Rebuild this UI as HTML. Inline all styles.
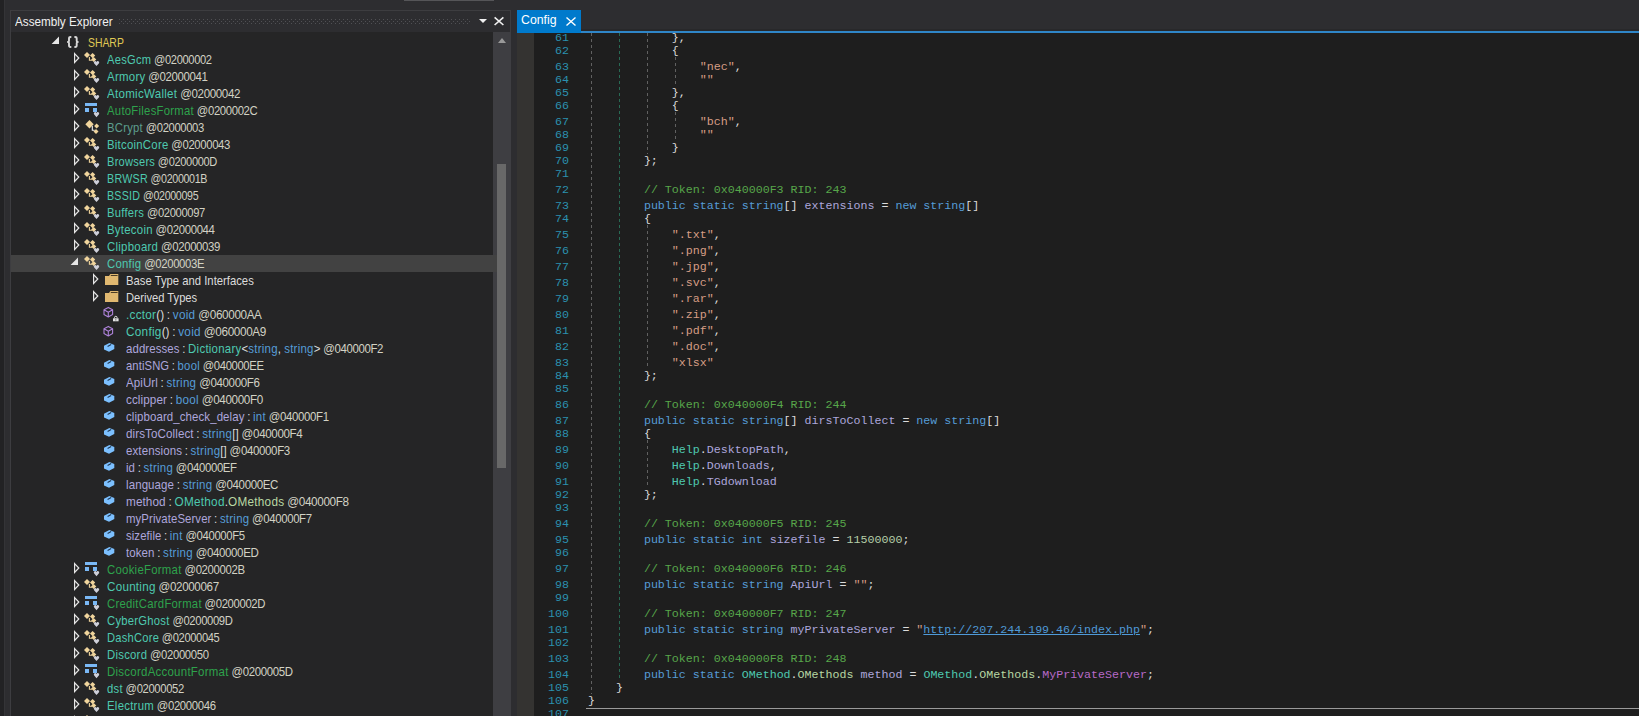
<!DOCTYPE html><html><head><meta charset="utf-8"><style>

html,body{margin:0;padding:0;width:1639px;height:716px;overflow:hidden;background:#2d2d30;}
*{box-sizing:border-box;}
.a{position:absolute;}
.t{position:absolute;white-space:pre;font-family:"Liberation Sans",sans-serif;font-size:13.1px;line-height:17px;height:17px;transform:scaleX(0.862);transform-origin:0 0;}
.g{position:absolute;width:1px;}
.c{position:absolute;white-space:pre;font-family:"Liberation Mono",monospace;font-size:11.657px;left:588px;}
.n{position:absolute;white-space:pre;font-family:"Liberation Mono",monospace;font-size:11.657px;color:#2b91af;right:1070px;text-align:right;}
.kw{color:#569cd6} .ty{color:#4ec9b0} .st{color:#d69d85} .com{color:#57a64a} .pun{color:#dcdcdc}
.num{color:#b5cea8} .fld{color:#ada6dc} .tok{color:#d2d2c4} .lnk{color:#4f9ad8;text-decoration:underline;}
.en{color:#b86ac8} .et{color:#b8d7a3}
.t .tok{letter-spacing:-0.42px} .t .ty,.t .sr,.t .sc,.t .kw,.t .et{letter-spacing:0.3px} .t .fld{letter-spacing:0.1px} .t .cs{word-spacing:-0.6px} .ns{color:#e0ca55} .sr{color:#2ea24c} .sc{color:#5d9e8e}

</style></head><body>
<div class="a" style="left:0;top:0;width:4px;height:716px;background:#222224"></div>
<div class="a" style="left:4px;top:0;width:1px;height:716px;background:#343437"></div>
<div class="a" style="left:404px;top:0;width:90px;height:1px;background:#555558"></div>
<div class="a" style="left:10px;top:10px;width:501px;height:706px;border:1px solid #3d3d40;border-bottom:none;background:#252526"></div>
<div class="a" style="left:11px;top:11px;width:499px;height:21px;background:#2d2d30"></div>
<div class="t" style="left:15px;top:13.2px;font-size:13.7px;transform:scaleX(0.855);color:#f1f1f1;line-height:18px;height:18px">Assembly Explorer</div>
<svg class="a" style="left:119px;top:19px" width="352" height="5"><defs><pattern id="g" width="4" height="4" patternUnits="userSpaceOnUse"><rect x="0" y="0" width="1" height="1" fill="#505054"/><rect x="2" y="2" width="1" height="1" fill="#505054"/></pattern></defs><rect width="352" height="5" fill="url(#g)"/></svg>
<svg class="a" style="left:477px;top:16px" width="12" height="10"><path d="M2 3 L10 3 L6 7 Z" fill="#f1f1f1"/></svg>
<svg class="a" style="left:492px;top:15px" width="14" height="12"><path d="M2.6 2.3 L11.4 10 M11.4 2.3 L2.6 10" stroke="#f1f1f1" stroke-width="1.6"/></svg>
<div class="a" style="left:493px;top:32px;width:18px;height:684px;background:#3e3e42"></div>
<svg class="a" style="left:493px;top:32px" width="18" height="14"><path d="M5 11 L13 11 L9 6 Z" fill="#999999"/></svg>
<div class="a" style="left:497px;top:164px;width:9px;height:304px;background:#686868"></div>
<div class="a" style="left:11px;top:255px;width:486px;height:17px;background:#424242"></div>
<svg class="a" style="left:51px;top:34px" width="10" height="12"><path d="M8 2.6 L8 10.1 L0.6 10.1 Z" fill="#e6e6e6"/></svg>
<svg class="a" style="left:64px;top:34px" width="18" height="16"><path d="M6.6 3 Q5 3 5 4.5 V7 Q5 8 3.9 8 Q5 8 5 9 V11.5 Q5 13 6.6 13 M11.1 3 Q12.7 3 12.7 4.5 V7 Q12.7 8 13.8 8 Q12.7 8 12.7 9 V11.5 Q12.7 13 11.1 13" fill="none" stroke="#d8d8d8" stroke-width="1.9" stroke-linecap="round" stroke-linejoin="round"/></svg>
<div class="t ns" style="left:88px;top:34px;transform:scaleX(0.7938);">SHARP</div>
<svg class="a" style="left:73px;top:51px" width="8" height="14"><path d="M1.6 2.6 L5.8 7 L1.6 11.4 Z" fill="none" stroke="#e6e6e6" stroke-width="1.2" stroke-linejoin="miter"/></svg>
<svg class="a" style="left:84px;top:51px" width="17" height="17"><path d="M0 4 L3 1 L6 4 L3 7 Z" fill="#f0d49c"/><path d="M6 4.6 L8.6 2 L11.2 4.6 L8.6 7.2 Z" fill="#f0d49c"/><path d="M7.1 8.5 L9.7 5.9 L12.3 8.5 L9.7 11.1 Z" fill="#f0d49c"/><path d="M5.4 6 V9.3 H8" fill="none" stroke="#f0d49c" stroke-width="1.1"/><path d="M12.5 15 L10 12.3 A1.35 1.35 0 0 1 12.5 10.9 A1.35 1.35 0 0 1 15 12.3 Z" fill="#cfd0da"/></svg>
<div class="t" style="left:107px;top:51px;transform:scaleX(0.8511);"><span class="ty">AesGcm</span><span class="tok"> @02000002</span></div>
<svg class="a" style="left:73px;top:68px" width="8" height="14"><path d="M1.6 2.6 L5.8 7 L1.6 11.4 Z" fill="none" stroke="#e6e6e6" stroke-width="1.2" stroke-linejoin="miter"/></svg>
<svg class="a" style="left:84px;top:68px" width="17" height="17"><path d="M0 4 L3 1 L6 4 L3 7 Z" fill="#f0d49c"/><path d="M6 4.6 L8.6 2 L11.2 4.6 L8.6 7.2 Z" fill="#f0d49c"/><path d="M7.1 8.5 L9.7 5.9 L12.3 8.5 L9.7 11.1 Z" fill="#f0d49c"/><path d="M5.4 6 V9.3 H8" fill="none" stroke="#f0d49c" stroke-width="1.1"/><path d="M12.5 15 L10 12.3 A1.35 1.35 0 0 1 12.5 10.9 A1.35 1.35 0 0 1 15 12.3 Z" fill="#cfd0da"/></svg>
<div class="t" style="left:107px;top:68px;transform:scaleX(0.8743);"><span class="ty">Armory</span><span class="tok"> @02000041</span></div>
<svg class="a" style="left:73px;top:85px" width="8" height="14"><path d="M1.6 2.6 L5.8 7 L1.6 11.4 Z" fill="none" stroke="#e6e6e6" stroke-width="1.2" stroke-linejoin="miter"/></svg>
<svg class="a" style="left:84px;top:85px" width="17" height="17"><path d="M0 4 L3 1 L6 4 L3 7 Z" fill="#f0d49c"/><path d="M6 4.6 L8.6 2 L11.2 4.6 L8.6 7.2 Z" fill="#f0d49c"/><path d="M7.1 8.5 L9.7 5.9 L12.3 8.5 L9.7 11.1 Z" fill="#f0d49c"/><path d="M5.4 6 V9.3 H8" fill="none" stroke="#f0d49c" stroke-width="1.1"/><path d="M12.5 15 L10 12.3 A1.35 1.35 0 0 1 12.5 10.9 A1.35 1.35 0 0 1 15 12.3 Z" fill="#cfd0da"/></svg>
<div class="t" style="left:107px;top:85px;transform:scaleX(0.8839);"><span class="ty">AtomicWallet</span><span class="tok"> @02000042</span></div>
<svg class="a" style="left:73px;top:102px" width="8" height="14"><path d="M1.6 2.6 L5.8 7 L1.6 11.4 Z" fill="none" stroke="#e6e6e6" stroke-width="1.2" stroke-linejoin="miter"/></svg>
<svg class="a" style="left:84px;top:102px" width="17" height="17"><rect x="1" y="1" width="12" height="3" fill="#7ab8f5"/><rect x="1" y="6" width="4" height="4" fill="#7ab8f5"/><rect x="9" y="6" width="4" height="4" fill="#7ab8f5"/><path d="M12.5 15.2 L10 12.3 A1.35 1.35 0 0 1 12.5 10.9 A1.35 1.35 0 0 1 15 12.3 Z" fill="#cfd0da"/></svg>
<div class="t" style="left:107px;top:102px;transform:scaleX(0.8655);"><span class="sr">AutoFilesFormat</span><span class="tok"> @0200002C</span></div>
<svg class="a" style="left:73px;top:119px" width="8" height="14"><path d="M1.6 2.6 L5.8 7 L1.6 11.4 Z" fill="none" stroke="#e6e6e6" stroke-width="1.2" stroke-linejoin="miter"/></svg>
<svg class="a" style="left:84px;top:119px" width="17" height="17"><path d="M1.3 5.3 L5.5 1.1 L9.7 5.3 L5.5 9.5 Z" fill="#f0d49c"/><path d="M10.1 7 L12.6 4.5 L15.1 7 L12.6 9.5 Z" fill="#f0d49c"/><path d="M9.5 12.6 L12 10.1 L14.5 12.6 L12 15.1 Z" fill="#f0d49c"/><path d="M8.3 6.8 V11.2 H10.6" fill="none" stroke="#f4f4f4" stroke-width="1.1"/></svg>
<div class="t" style="left:107px;top:119px;transform:scaleX(0.8589);"><span class="sc">BCrypt</span><span class="tok"> @02000003</span></div>
<svg class="a" style="left:73px;top:136px" width="8" height="14"><path d="M1.6 2.6 L5.8 7 L1.6 11.4 Z" fill="none" stroke="#e6e6e6" stroke-width="1.2" stroke-linejoin="miter"/></svg>
<svg class="a" style="left:84px;top:136px" width="17" height="17"><path d="M0 4 L3 1 L6 4 L3 7 Z" fill="#f0d49c"/><path d="M6 4.6 L8.6 2 L11.2 4.6 L8.6 7.2 Z" fill="#f0d49c"/><path d="M7.1 8.5 L9.7 5.9 L12.3 8.5 L9.7 11.1 Z" fill="#f0d49c"/><path d="M5.4 6 V9.3 H8" fill="none" stroke="#f0d49c" stroke-width="1.1"/><path d="M12.5 15 L10 12.3 A1.35 1.35 0 0 1 12.5 10.9 A1.35 1.35 0 0 1 15 12.3 Z" fill="#cfd0da"/></svg>
<div class="t" style="left:107px;top:136px;transform:scaleX(0.8663);"><span class="ty">BitcoinCore</span><span class="tok"> @02000043</span></div>
<svg class="a" style="left:73px;top:153px" width="8" height="14"><path d="M1.6 2.6 L5.8 7 L1.6 11.4 Z" fill="none" stroke="#e6e6e6" stroke-width="1.2" stroke-linejoin="miter"/></svg>
<svg class="a" style="left:84px;top:153px" width="17" height="17"><path d="M0 4 L3 1 L6 4 L3 7 Z" fill="#f0d49c"/><path d="M6 4.6 L8.6 2 L11.2 4.6 L8.6 7.2 Z" fill="#f0d49c"/><path d="M7.1 8.5 L9.7 5.9 L12.3 8.5 L9.7 11.1 Z" fill="#f0d49c"/><path d="M5.4 6 V9.3 H8" fill="none" stroke="#f0d49c" stroke-width="1.1"/><path d="M12.5 15 L10 12.3 A1.35 1.35 0 0 1 12.5 10.9 A1.35 1.35 0 0 1 15 12.3 Z" fill="#cfd0da"/></svg>
<div class="t" style="left:107px;top:153px;transform:scaleX(0.8449);"><span class="ty">Browsers</span><span class="tok"> @0200000D</span></div>
<svg class="a" style="left:73px;top:170px" width="8" height="14"><path d="M1.6 2.6 L5.8 7 L1.6 11.4 Z" fill="none" stroke="#e6e6e6" stroke-width="1.2" stroke-linejoin="miter"/></svg>
<svg class="a" style="left:84px;top:170px" width="17" height="17"><path d="M0 4 L3 1 L6 4 L3 7 Z" fill="#f0d49c"/><path d="M6 4.6 L8.6 2 L11.2 4.6 L8.6 7.2 Z" fill="#f0d49c"/><path d="M7.1 8.5 L9.7 5.9 L12.3 8.5 L9.7 11.1 Z" fill="#f0d49c"/><path d="M5.4 6 V9.3 H8" fill="none" stroke="#f0d49c" stroke-width="1.1"/><path d="M12.5 15 L10 12.3 A1.35 1.35 0 0 1 12.5 10.9 A1.35 1.35 0 0 1 15 12.3 Z" fill="#cfd0da"/></svg>
<div class="t" style="left:107px;top:170px;transform:scaleX(0.8178);"><span class="ty">BRWSR</span><span class="tok"> @0200001B</span></div>
<svg class="a" style="left:73px;top:187px" width="8" height="14"><path d="M1.6 2.6 L5.8 7 L1.6 11.4 Z" fill="none" stroke="#e6e6e6" stroke-width="1.2" stroke-linejoin="miter"/></svg>
<svg class="a" style="left:84px;top:187px" width="17" height="17"><path d="M0 4 L3 1 L6 4 L3 7 Z" fill="#f0d49c"/><path d="M6 4.6 L8.6 2 L11.2 4.6 L8.6 7.2 Z" fill="#f0d49c"/><path d="M7.1 8.5 L9.7 5.9 L12.3 8.5 L9.7 11.1 Z" fill="#f0d49c"/><path d="M5.4 6 V9.3 H8" fill="none" stroke="#f0d49c" stroke-width="1.1"/><path d="M12.5 15 L10 12.3 A1.35 1.35 0 0 1 12.5 10.9 A1.35 1.35 0 0 1 15 12.3 Z" fill="#cfd0da"/></svg>
<div class="t" style="left:107px;top:187px;transform:scaleX(0.8163);"><span class="ty">BSSID</span><span class="tok"> @02000095</span></div>
<svg class="a" style="left:73px;top:204px" width="8" height="14"><path d="M1.6 2.6 L5.8 7 L1.6 11.4 Z" fill="none" stroke="#e6e6e6" stroke-width="1.2" stroke-linejoin="miter"/></svg>
<svg class="a" style="left:84px;top:204px" width="17" height="17"><path d="M0 4 L3 1 L6 4 L3 7 Z" fill="#f0d49c"/><path d="M6 4.6 L8.6 2 L11.2 4.6 L8.6 7.2 Z" fill="#f0d49c"/><path d="M7.1 8.5 L9.7 5.9 L12.3 8.5 L9.7 11.1 Z" fill="#f0d49c"/><path d="M5.4 6 V9.3 H8" fill="none" stroke="#f0d49c" stroke-width="1.1"/><path d="M12.5 15 L10 12.3 A1.35 1.35 0 0 1 12.5 10.9 A1.35 1.35 0 0 1 15 12.3 Z" fill="#cfd0da"/></svg>
<div class="t" style="left:107px;top:204px;transform:scaleX(0.8562);"><span class="ty">Buffers</span><span class="tok"> @02000097</span></div>
<svg class="a" style="left:73px;top:221px" width="8" height="14"><path d="M1.6 2.6 L5.8 7 L1.6 11.4 Z" fill="none" stroke="#e6e6e6" stroke-width="1.2" stroke-linejoin="miter"/></svg>
<svg class="a" style="left:84px;top:221px" width="17" height="17"><path d="M0 4 L3 1 L6 4 L3 7 Z" fill="#f0d49c"/><path d="M6 4.6 L8.6 2 L11.2 4.6 L8.6 7.2 Z" fill="#f0d49c"/><path d="M7.1 8.5 L9.7 5.9 L12.3 8.5 L9.7 11.1 Z" fill="#f0d49c"/><path d="M5.4 6 V9.3 H8" fill="none" stroke="#f0d49c" stroke-width="1.1"/><path d="M12.5 15 L10 12.3 A1.35 1.35 0 0 1 12.5 10.9 A1.35 1.35 0 0 1 15 12.3 Z" fill="#cfd0da"/></svg>
<div class="t" style="left:107px;top:221px;transform:scaleX(0.8701);"><span class="ty">Bytecoin</span><span class="tok"> @02000044</span></div>
<svg class="a" style="left:73px;top:238px" width="8" height="14"><path d="M1.6 2.6 L5.8 7 L1.6 11.4 Z" fill="none" stroke="#e6e6e6" stroke-width="1.2" stroke-linejoin="miter"/></svg>
<svg class="a" style="left:84px;top:238px" width="17" height="17"><path d="M0 4 L3 1 L6 4 L3 7 Z" fill="#f0d49c"/><path d="M6 4.6 L8.6 2 L11.2 4.6 L8.6 7.2 Z" fill="#f0d49c"/><path d="M7.1 8.5 L9.7 5.9 L12.3 8.5 L9.7 11.1 Z" fill="#f0d49c"/><path d="M5.4 6 V9.3 H8" fill="none" stroke="#f0d49c" stroke-width="1.1"/><path d="M12.5 15 L10 12.3 A1.35 1.35 0 0 1 12.5 10.9 A1.35 1.35 0 0 1 15 12.3 Z" fill="#cfd0da"/></svg>
<div class="t" style="left:107px;top:238px;transform:scaleX(0.8712);"><span class="ty">Clipboard</span><span class="tok"> @02000039</span></div>
<svg class="a" style="left:70px;top:255px" width="10" height="12"><path d="M8 2.6 L8 10.1 L0.6 10.1 Z" fill="#e6e6e6"/></svg>
<svg class="a" style="left:84px;top:255px" width="17" height="17"><path d="M0 4 L3 1 L6 4 L3 7 Z" fill="#f0d49c"/><path d="M6 4.6 L8.6 2 L11.2 4.6 L8.6 7.2 Z" fill="#f0d49c"/><path d="M7.1 8.5 L9.7 5.9 L12.3 8.5 L9.7 11.1 Z" fill="#f0d49c"/><path d="M5.4 6 V9.3 H8" fill="none" stroke="#f0d49c" stroke-width="1.1"/><path d="M12.5 15 L10 12.3 A1.35 1.35 0 0 1 12.5 10.9 A1.35 1.35 0 0 1 15 12.3 Z" fill="#cfd0da"/></svg>
<div class="t" style="left:107px;top:255px;transform:scaleX(0.8667);"><span class="ty">Config</span><span class="tok"> @0200003E</span></div>
<svg class="a" style="left:92px;top:272px" width="8" height="14"><path d="M1.6 2.6 L5.8 7 L1.6 11.4 Z" fill="none" stroke="#e6e6e6" stroke-width="1.2" stroke-linejoin="miter"/></svg>
<svg class="a" style="left:104px;top:272px" width="15" height="15"><path d="M1 4 H5 L6.3 2 H14.3 V13 H1 Z" fill="#e0b870"/><rect x="6.8" y="3" width="6.8" height="0.9" fill="#3a2e1c"/></svg>
<div class="t pun" style="left:126px;top:272px;transform:scaleX(0.8620);">Base Type and Interfaces</div>
<svg class="a" style="left:92px;top:289px" width="8" height="14"><path d="M1.6 2.6 L5.8 7 L1.6 11.4 Z" fill="none" stroke="#e6e6e6" stroke-width="1.2" stroke-linejoin="miter"/></svg>
<svg class="a" style="left:104px;top:289px" width="15" height="15"><path d="M1 4 H5 L6.3 2 H14.3 V13 H1 Z" fill="#e0b870"/><rect x="6.8" y="3" width="6.8" height="0.9" fill="#3a2e1c"/></svg>
<div class="t pun" style="left:126px;top:289px;transform:scaleX(0.8525);">Derived Types</div>
<svg class="a" style="left:103px;top:306px" width="17" height="17"><path d="M5.3 1.4 L9.6 3.8 V8.6 L5.3 11 L1 8.6 V3.8 Z M1 3.8 L5.3 6.2 L9.6 3.8 M5.3 6.2 V11" fill="none" stroke="#ad82d8" stroke-width="1.1" stroke-linejoin="round"/><rect x="10" y="12.3" width="5.6" height="3" fill="#e2e2e2"/><path d="M11.5 12.3 V11.6 A1.3 1.3 0 0 1 14.1 11.6 V12.3" fill="none" stroke="#e2e2e2" stroke-width="1"/><rect x="12.4" y="13.3" width="0.9" height="1.1" fill="#404040"/></svg>
<div class="t" style="left:126px;top:306px;transform:scaleX(0.8954);"><span class="ty">.cctor</span><span class="pun">()</span><span class="pun cs"> : </span><span class="kw">void</span><span class="tok"> @060000AA</span></div>
<svg class="a" style="left:103px;top:325px" width="17" height="17"><path d="M5.3 1.4 L9.6 3.8 V8.6 L5.3 11 L1 8.6 V3.8 Z M1 3.8 L5.3 6.2 L9.6 3.8 M5.3 6.2 V11" fill="none" stroke="#ad82d8" stroke-width="1.1" stroke-linejoin="round"/></svg>
<div class="t" style="left:126px;top:323px;transform:scaleX(0.8986);"><span class="ty">Config</span><span class="pun">()</span><span class="pun cs"> : </span><span class="kw">void</span><span class="tok"> @060000A9</span></div>
<svg class="a" style="left:103px;top:340px" width="17" height="17"><path d="M1 5.8 L6.4 3 L11.3 5 V9 L6 11.8 L1 9.6 Z" fill="#7cc0ff"/><path d="M4.6 6.4 L8.2 4.6" fill="none" stroke="#1c3550" stroke-width="1.1"/></svg>
<div class="t" style="left:126px;top:340px;transform:scaleX(0.8738);"><span class="fld">addresses</span><span class="pun cs"> : </span><span class="ty">Dictionary</span><span class="pun">&lt;</span><span class="kw">string</span><span class="pun">, </span><span class="kw">string</span><span class="pun">&gt;</span><span class="tok"> @040000F2</span></div>
<svg class="a" style="left:103px;top:357px" width="17" height="17"><path d="M1 5.8 L6.4 3 L11.3 5 V9 L6 11.8 L1 9.6 Z" fill="#7cc0ff"/><path d="M4.6 6.4 L8.2 4.6" fill="none" stroke="#1c3550" stroke-width="1.1"/></svg>
<div class="t" style="left:126px;top:357px;transform:scaleX(0.8612);"><span class="fld">antiSNG</span><span class="pun cs"> : </span><span class="kw">bool</span><span class="tok"> @040000EE</span></div>
<svg class="a" style="left:103px;top:374px" width="17" height="17"><path d="M1 5.8 L6.4 3 L11.3 5 V9 L6 11.8 L1 9.6 Z" fill="#7cc0ff"/><path d="M4.6 6.4 L8.2 4.6" fill="none" stroke="#1c3550" stroke-width="1.1"/></svg>
<div class="t" style="left:126px;top:374px;transform:scaleX(0.8810);"><span class="fld">ApiUrl</span><span class="pun cs"> : </span><span class="kw">string</span><span class="tok"> @040000F6</span></div>
<svg class="a" style="left:103px;top:391px" width="17" height="17"><path d="M1 5.8 L6.4 3 L11.3 5 V9 L6 11.8 L1 9.6 Z" fill="#7cc0ff"/><path d="M4.6 6.4 L8.2 4.6" fill="none" stroke="#1c3550" stroke-width="1.1"/></svg>
<div class="t" style="left:126px;top:391px;transform:scaleX(0.8923);"><span class="fld">cclipper</span><span class="pun cs"> : </span><span class="kw">bool</span><span class="tok"> @040000F0</span></div>
<svg class="a" style="left:103px;top:408px" width="17" height="17"><path d="M1 5.8 L6.4 3 L11.3 5 V9 L6 11.8 L1 9.6 Z" fill="#7cc0ff"/><path d="M4.6 6.4 L8.2 4.6" fill="none" stroke="#1c3550" stroke-width="1.1"/></svg>
<div class="t" style="left:126px;top:408px;transform:scaleX(0.8758);"><span class="fld">clipboard_check_delay</span><span class="pun cs"> : </span><span class="kw">int</span><span class="tok"> @040000F1</span></div>
<svg class="a" style="left:103px;top:425px" width="17" height="17"><path d="M1 5.8 L6.4 3 L11.3 5 V9 L6 11.8 L1 9.6 Z" fill="#7cc0ff"/><path d="M4.6 6.4 L8.2 4.6" fill="none" stroke="#1c3550" stroke-width="1.1"/></svg>
<div class="t" style="left:126px;top:425px;transform:scaleX(0.8874);"><span class="fld">dirsToCollect</span><span class="pun cs"> : </span><span class="kw">string</span><span class="pun">[]</span><span class="tok"> @040000F4</span></div>
<svg class="a" style="left:103px;top:442px" width="17" height="17"><path d="M1 5.8 L6.4 3 L11.3 5 V9 L6 11.8 L1 9.6 Z" fill="#7cc0ff"/><path d="M4.6 6.4 L8.2 4.6" fill="none" stroke="#1c3550" stroke-width="1.1"/></svg>
<div class="t" style="left:126px;top:442px;transform:scaleX(0.8802);"><span class="fld">extensions</span><span class="pun cs"> : </span><span class="kw">string</span><span class="pun">[]</span><span class="tok"> @040000F3</span></div>
<svg class="a" style="left:103px;top:459px" width="17" height="17"><path d="M1 5.8 L6.4 3 L11.3 5 V9 L6 11.8 L1 9.6 Z" fill="#7cc0ff"/><path d="M4.6 6.4 L8.2 4.6" fill="none" stroke="#1c3550" stroke-width="1.1"/></svg>
<div class="t" style="left:126px;top:459px;transform:scaleX(0.8710);"><span class="fld">id</span><span class="pun cs"> : </span><span class="kw">string</span><span class="tok"> @040000EF</span></div>
<svg class="a" style="left:103px;top:476px" width="17" height="17"><path d="M1 5.8 L6.4 3 L11.3 5 V9 L6 11.8 L1 9.6 Z" fill="#7cc0ff"/><path d="M4.6 6.4 L8.2 4.6" fill="none" stroke="#1c3550" stroke-width="1.1"/></svg>
<div class="t" style="left:126px;top:476px;transform:scaleX(0.8793);"><span class="fld">language</span><span class="pun cs"> : </span><span class="kw">string</span><span class="tok"> @040000EC</span></div>
<svg class="a" style="left:103px;top:493px" width="17" height="17"><path d="M1 5.8 L6.4 3 L11.3 5 V9 L6 11.8 L1 9.6 Z" fill="#7cc0ff"/><path d="M4.6 6.4 L8.2 4.6" fill="none" stroke="#1c3550" stroke-width="1.1"/></svg>
<div class="t" style="left:126px;top:493px;transform:scaleX(0.8976);"><span class="fld">method</span><span class="pun cs"> : </span><span class="ty">OMethod</span><span class="pun">.</span><span class="et">OMethods</span><span class="tok"> @040000F8</span></div>
<svg class="a" style="left:103px;top:510px" width="17" height="17"><path d="M1 5.8 L6.4 3 L11.3 5 V9 L6 11.8 L1 9.6 Z" fill="#7cc0ff"/><path d="M4.6 6.4 L8.2 4.6" fill="none" stroke="#1c3550" stroke-width="1.1"/></svg>
<div class="t" style="left:126px;top:510px;transform:scaleX(0.8695);"><span class="fld">myPrivateServer</span><span class="pun cs"> : </span><span class="kw">string</span><span class="tok"> @040000F7</span></div>
<svg class="a" style="left:103px;top:527px" width="17" height="17"><path d="M1 5.8 L6.4 3 L11.3 5 V9 L6 11.8 L1 9.6 Z" fill="#7cc0ff"/><path d="M4.6 6.4 L8.2 4.6" fill="none" stroke="#1c3550" stroke-width="1.1"/></svg>
<div class="t" style="left:126px;top:527px;transform:scaleX(0.8669);"><span class="fld">sizefile</span><span class="pun cs"> : </span><span class="kw">int</span><span class="tok"> @040000F5</span></div>
<svg class="a" style="left:103px;top:544px" width="17" height="17"><path d="M1 5.8 L6.4 3 L11.3 5 V9 L6 11.8 L1 9.6 Z" fill="#7cc0ff"/><path d="M4.6 6.4 L8.2 4.6" fill="none" stroke="#1c3550" stroke-width="1.1"/></svg>
<div class="t" style="left:126px;top:544px;transform:scaleX(0.8785);"><span class="fld">token</span><span class="pun cs"> : </span><span class="kw">string</span><span class="tok"> @040000ED</span></div>
<svg class="a" style="left:73px;top:561px" width="8" height="14"><path d="M1.6 2.6 L5.8 7 L1.6 11.4 Z" fill="none" stroke="#e6e6e6" stroke-width="1.2" stroke-linejoin="miter"/></svg>
<svg class="a" style="left:84px;top:561px" width="17" height="17"><rect x="1" y="1" width="12" height="3" fill="#7ab8f5"/><rect x="1" y="6" width="4" height="4" fill="#7ab8f5"/><rect x="9" y="6" width="4" height="4" fill="#7ab8f5"/><path d="M12.5 15.2 L10 12.3 A1.35 1.35 0 0 1 12.5 10.9 A1.35 1.35 0 0 1 15 12.3 Z" fill="#cfd0da"/></svg>
<div class="t" style="left:107px;top:561px;transform:scaleX(0.8696);"><span class="sr">CookieFormat</span><span class="tok"> @0200002B</span></div>
<svg class="a" style="left:73px;top:578px" width="8" height="14"><path d="M1.6 2.6 L5.8 7 L1.6 11.4 Z" fill="none" stroke="#e6e6e6" stroke-width="1.2" stroke-linejoin="miter"/></svg>
<svg class="a" style="left:84px;top:578px" width="17" height="17"><path d="M0 4 L3 1 L6 4 L3 7 Z" fill="#f0d49c"/><path d="M6 4.6 L8.6 2 L11.2 4.6 L8.6 7.2 Z" fill="#f0d49c"/><path d="M7.1 8.5 L9.7 5.9 L12.3 8.5 L9.7 11.1 Z" fill="#f0d49c"/><path d="M5.4 6 V9.3 H8" fill="none" stroke="#f0d49c" stroke-width="1.1"/><path d="M12.5 15 L10 12.3 A1.35 1.35 0 0 1 12.5 10.9 A1.35 1.35 0 0 1 15 12.3 Z" fill="#cfd0da"/></svg>
<div class="t" style="left:107px;top:578px;transform:scaleX(0.8881);"><span class="ty">Counting</span><span class="tok"> @02000067</span></div>
<svg class="a" style="left:73px;top:595px" width="8" height="14"><path d="M1.6 2.6 L5.8 7 L1.6 11.4 Z" fill="none" stroke="#e6e6e6" stroke-width="1.2" stroke-linejoin="miter"/></svg>
<svg class="a" style="left:84px;top:595px" width="17" height="17"><rect x="1" y="1" width="12" height="3" fill="#7ab8f5"/><rect x="1" y="6" width="4" height="4" fill="#7ab8f5"/><rect x="9" y="6" width="4" height="4" fill="#7ab8f5"/><path d="M12.5 15.2 L10 12.3 A1.35 1.35 0 0 1 12.5 10.9 A1.35 1.35 0 0 1 15 12.3 Z" fill="#cfd0da"/></svg>
<div class="t" style="left:107px;top:595px;transform:scaleX(0.8653);"><span class="sr">CreditCardFormat</span><span class="tok"> @0200002D</span></div>
<svg class="a" style="left:73px;top:612px" width="8" height="14"><path d="M1.6 2.6 L5.8 7 L1.6 11.4 Z" fill="none" stroke="#e6e6e6" stroke-width="1.2" stroke-linejoin="miter"/></svg>
<svg class="a" style="left:84px;top:612px" width="17" height="17"><path d="M0 4 L3 1 L6 4 L3 7 Z" fill="#f0d49c"/><path d="M6 4.6 L8.6 2 L11.2 4.6 L8.6 7.2 Z" fill="#f0d49c"/><path d="M7.1 8.5 L9.7 5.9 L12.3 8.5 L9.7 11.1 Z" fill="#f0d49c"/><path d="M5.4 6 V9.3 H8" fill="none" stroke="#f0d49c" stroke-width="1.1"/><path d="M12.5 15 L10 12.3 A1.35 1.35 0 0 1 12.5 10.9 A1.35 1.35 0 0 1 15 12.3 Z" fill="#cfd0da"/></svg>
<div class="t" style="left:107px;top:612px;transform:scaleX(0.8594);"><span class="ty">CyberGhost</span><span class="tok"> @0200009D</span></div>
<svg class="a" style="left:73px;top:629px" width="8" height="14"><path d="M1.6 2.6 L5.8 7 L1.6 11.4 Z" fill="none" stroke="#e6e6e6" stroke-width="1.2" stroke-linejoin="miter"/></svg>
<svg class="a" style="left:84px;top:629px" width="17" height="17"><path d="M0 4 L3 1 L6 4 L3 7 Z" fill="#f0d49c"/><path d="M6 4.6 L8.6 2 L11.2 4.6 L8.6 7.2 Z" fill="#f0d49c"/><path d="M7.1 8.5 L9.7 5.9 L12.3 8.5 L9.7 11.1 Z" fill="#f0d49c"/><path d="M5.4 6 V9.3 H8" fill="none" stroke="#f0d49c" stroke-width="1.1"/><path d="M12.5 15 L10 12.3 A1.35 1.35 0 0 1 12.5 10.9 A1.35 1.35 0 0 1 15 12.3 Z" fill="#cfd0da"/></svg>
<div class="t" style="left:107px;top:629px;transform:scaleX(0.8495);"><span class="ty">DashCore</span><span class="tok"> @02000045</span></div>
<svg class="a" style="left:73px;top:646px" width="8" height="14"><path d="M1.6 2.6 L5.8 7 L1.6 11.4 Z" fill="none" stroke="#e6e6e6" stroke-width="1.2" stroke-linejoin="miter"/></svg>
<svg class="a" style="left:84px;top:646px" width="17" height="17"><path d="M0 4 L3 1 L6 4 L3 7 Z" fill="#f0d49c"/><path d="M6 4.6 L8.6 2 L11.2 4.6 L8.6 7.2 Z" fill="#f0d49c"/><path d="M7.1 8.5 L9.7 5.9 L12.3 8.5 L9.7 11.1 Z" fill="#f0d49c"/><path d="M5.4 6 V9.3 H8" fill="none" stroke="#f0d49c" stroke-width="1.1"/><path d="M12.5 15 L10 12.3 A1.35 1.35 0 0 1 12.5 10.9 A1.35 1.35 0 0 1 15 12.3 Z" fill="#cfd0da"/></svg>
<div class="t" style="left:107px;top:646px;transform:scaleX(0.8648);"><span class="ty">Discord</span><span class="tok"> @02000050</span></div>
<svg class="a" style="left:73px;top:663px" width="8" height="14"><path d="M1.6 2.6 L5.8 7 L1.6 11.4 Z" fill="none" stroke="#e6e6e6" stroke-width="1.2" stroke-linejoin="miter"/></svg>
<svg class="a" style="left:84px;top:663px" width="17" height="17"><rect x="1" y="1" width="12" height="3" fill="#7ab8f5"/><rect x="1" y="6" width="4" height="4" fill="#7ab8f5"/><rect x="9" y="6" width="4" height="4" fill="#7ab8f5"/><path d="M12.5 15.2 L10 12.3 A1.35 1.35 0 0 1 12.5 10.9 A1.35 1.35 0 0 1 15 12.3 Z" fill="#cfd0da"/></svg>
<div class="t" style="left:107px;top:663px;transform:scaleX(0.8741);"><span class="sr">DiscordAccountFormat</span><span class="tok"> @0200005D</span></div>
<svg class="a" style="left:73px;top:680px" width="8" height="14"><path d="M1.6 2.6 L5.8 7 L1.6 11.4 Z" fill="none" stroke="#e6e6e6" stroke-width="1.2" stroke-linejoin="miter"/></svg>
<svg class="a" style="left:84px;top:680px" width="17" height="17"><path d="M0 4 L3 1 L6 4 L3 7 Z" fill="#f0d49c"/><path d="M6 4.6 L8.6 2 L11.2 4.6 L8.6 7.2 Z" fill="#f0d49c"/><path d="M7.1 8.5 L9.7 5.9 L12.3 8.5 L9.7 11.1 Z" fill="#f0d49c"/><path d="M5.4 6 V9.3 H8" fill="none" stroke="#f0d49c" stroke-width="1.1"/><path d="M12.5 15 L10 12.3 A1.35 1.35 0 0 1 12.5 10.9 A1.35 1.35 0 0 1 15 12.3 Z" fill="#cfd0da"/></svg>
<div class="t" style="left:107px;top:680px;transform:scaleX(0.8597);"><span class="ty">dst</span><span class="tok"> @02000052</span></div>
<svg class="a" style="left:73px;top:697px" width="8" height="14"><path d="M1.6 2.6 L5.8 7 L1.6 11.4 Z" fill="none" stroke="#e6e6e6" stroke-width="1.2" stroke-linejoin="miter"/></svg>
<svg class="a" style="left:84px;top:697px" width="17" height="17"><path d="M0 4 L3 1 L6 4 L3 7 Z" fill="#f0d49c"/><path d="M6 4.6 L8.6 2 L11.2 4.6 L8.6 7.2 Z" fill="#f0d49c"/><path d="M7.1 8.5 L9.7 5.9 L12.3 8.5 L9.7 11.1 Z" fill="#f0d49c"/><path d="M5.4 6 V9.3 H8" fill="none" stroke="#f0d49c" stroke-width="1.1"/><path d="M12.5 15 L10 12.3 A1.35 1.35 0 0 1 12.5 10.9 A1.35 1.35 0 0 1 15 12.3 Z" fill="#cfd0da"/></svg>
<div class="t" style="left:107px;top:697px;transform:scaleX(0.8684);"><span class="ty">Electrum</span><span class="tok"> @02000046</span></div>
<svg class="a" style="left:73px;top:714px" width="8" height="14"><path d="M1.6 2.6 L5.8 7 L1.6 11.4 Z" fill="none" stroke="#e6e6e6" stroke-width="1.2" stroke-linejoin="miter"/></svg>
<svg class="a" style="left:84px;top:714px" width="17" height="17"><path d="M0 4 L3 1 L6 4 L3 7 Z" fill="#f0d49c"/><path d="M6 4.6 L8.6 2 L11.2 4.6 L8.6 7.2 Z" fill="#f0d49c"/><path d="M7.1 8.5 L9.7 5.9 L12.3 8.5 L9.7 11.1 Z" fill="#f0d49c"/><path d="M5.4 6 V9.3 H8" fill="none" stroke="#f0d49c" stroke-width="1.1"/><path d="M12.5 15 L10 12.3 A1.35 1.35 0 0 1 12.5 10.9 A1.35 1.35 0 0 1 15 12.3 Z" fill="#cfd0da"/></svg>
<div class="t" style="left:107px;top:714px;transform:scaleX(0.8620);"><span class="ty">Ethereum</span><span class="tok"> @02000047</span></div>
<div class="a" style="left:517px;top:10px;width:64px;height:21px;background:#007acc"></div>
<div class="t" style="left:521px;top:11.34px;font-size:12.3px;transform:none;color:#ffffff;line-height:19px;height:19px">Config</div>
<svg class="a" style="left:565px;top:16px" width="12" height="11"><path d="M1.5 1.5 L10.5 9.5 M10.5 1.5 L1.5 9.5" stroke="#ffffff" stroke-width="1.4"/></svg>
<div class="a" style="left:581px;top:29px;width:1058px;height:2px;background:#28282a"></div>
<div class="a" style="left:517px;top:31px;width:1122px;height:2px;background:#2f86c8"></div>
<div class="a" style="left:517px;top:31px;width:64px;height:2px;background:#007acc"></div>
<div class="a" style="left:517px;top:33px;width:17px;height:683px;background:#343331"></div>
<div class="a" style="left:534px;top:33px;width:1105px;height:683px;background:#1e1e1e"></div>
<div class="n" style="top:31.27px;line-height:14px">61</div>
<div class="c" style="top:31.27px;line-height:14px"><span class="pun">            },</span></div>
<div class="n" style="top:44.27px;line-height:14px">62</div>
<div class="c" style="top:44.27px;line-height:14px"><span class="pun">            {</span></div>
<div class="n" style="top:60.27px;line-height:14px">63</div>
<div class="c" style="top:60.27px;line-height:14px"><span class="pun">                </span><span class="st">&quot;nec&quot;</span><span class="pun">,</span></div>
<div class="n" style="top:73.27px;line-height:14px">64</div>
<div class="c" style="top:73.27px;line-height:14px"><span class="pun">                </span><span class="st">&quot;&quot;</span></div>
<div class="n" style="top:86.27px;line-height:14px">65</div>
<div class="c" style="top:86.27px;line-height:14px"><span class="pun">            },</span></div>
<div class="n" style="top:99.27px;line-height:14px">66</div>
<div class="c" style="top:99.27px;line-height:14px"><span class="pun">            {</span></div>
<div class="n" style="top:115.27px;line-height:14px">67</div>
<div class="c" style="top:115.27px;line-height:14px"><span class="pun">                </span><span class="st">&quot;bch&quot;</span><span class="pun">,</span></div>
<div class="n" style="top:128.27px;line-height:14px">68</div>
<div class="c" style="top:128.27px;line-height:14px"><span class="pun">                </span><span class="st">&quot;&quot;</span></div>
<div class="n" style="top:141.27px;line-height:14px">69</div>
<div class="c" style="top:141.27px;line-height:14px"><span class="pun">            }</span></div>
<div class="n" style="top:154.27px;line-height:14px">70</div>
<div class="c" style="top:154.27px;line-height:14px"><span class="pun">        };</span></div>
<div class="n" style="top:167.27px;line-height:14px">71</div>
<div class="n" style="top:183.27px;line-height:14px">72</div>
<div class="c" style="top:183.27px;line-height:14px"><span class="pun">        </span><span class="com">// Token: 0x040000F3 RID: 243</span></div>
<div class="n" style="top:199.27px;line-height:14px">73</div>
<div class="c" style="top:199.27px;line-height:14px"><span class="pun">        </span><span class="kw">public static string</span><span class="pun">[] </span><span class="fld">extensions</span><span class="pun"> = </span><span class="kw">new string</span><span class="pun">[]</span></div>
<div class="n" style="top:212.27px;line-height:14px">74</div>
<div class="c" style="top:212.27px;line-height:14px"><span class="pun">        {</span></div>
<div class="n" style="top:228.27px;line-height:14px">75</div>
<div class="c" style="top:228.27px;line-height:14px"><span class="pun">            </span><span class="st">&quot;.txt&quot;</span><span class="pun">,</span></div>
<div class="n" style="top:244.27px;line-height:14px">76</div>
<div class="c" style="top:244.27px;line-height:14px"><span class="pun">            </span><span class="st">&quot;.png&quot;</span><span class="pun">,</span></div>
<div class="n" style="top:260.27px;line-height:14px">77</div>
<div class="c" style="top:260.27px;line-height:14px"><span class="pun">            </span><span class="st">&quot;.jpg&quot;</span><span class="pun">,</span></div>
<div class="n" style="top:276.27px;line-height:14px">78</div>
<div class="c" style="top:276.27px;line-height:14px"><span class="pun">            </span><span class="st">&quot;.svc&quot;</span><span class="pun">,</span></div>
<div class="n" style="top:292.27px;line-height:14px">79</div>
<div class="c" style="top:292.27px;line-height:14px"><span class="pun">            </span><span class="st">&quot;.rar&quot;</span><span class="pun">,</span></div>
<div class="n" style="top:308.27px;line-height:14px">80</div>
<div class="c" style="top:308.27px;line-height:14px"><span class="pun">            </span><span class="st">&quot;.zip&quot;</span><span class="pun">,</span></div>
<div class="n" style="top:324.27px;line-height:14px">81</div>
<div class="c" style="top:324.27px;line-height:14px"><span class="pun">            </span><span class="st">&quot;.pdf&quot;</span><span class="pun">,</span></div>
<div class="n" style="top:340.27px;line-height:14px">82</div>
<div class="c" style="top:340.27px;line-height:14px"><span class="pun">            </span><span class="st">&quot;.doc&quot;</span><span class="pun">,</span></div>
<div class="n" style="top:356.27px;line-height:14px">83</div>
<div class="c" style="top:356.27px;line-height:14px"><span class="pun">            </span><span class="st">&quot;xlsx&quot;</span></div>
<div class="n" style="top:369.27px;line-height:14px">84</div>
<div class="c" style="top:369.27px;line-height:14px"><span class="pun">        };</span></div>
<div class="n" style="top:382.27px;line-height:14px">85</div>
<div class="n" style="top:398.27px;line-height:14px">86</div>
<div class="c" style="top:398.27px;line-height:14px"><span class="pun">        </span><span class="com">// Token: 0x040000F4 RID: 244</span></div>
<div class="n" style="top:414.27px;line-height:14px">87</div>
<div class="c" style="top:414.27px;line-height:14px"><span class="pun">        </span><span class="kw">public static string</span><span class="pun">[] </span><span class="fld">dirsToCollect</span><span class="pun"> = </span><span class="kw">new string</span><span class="pun">[]</span></div>
<div class="n" style="top:427.27px;line-height:14px">88</div>
<div class="c" style="top:427.27px;line-height:14px"><span class="pun">        {</span></div>
<div class="n" style="top:443.27px;line-height:14px">89</div>
<div class="c" style="top:443.27px;line-height:14px"><span class="pun">            </span><span class="ty">Help</span><span class="pun">.</span><span class="fld">DesktopPath</span><span class="pun">,</span></div>
<div class="n" style="top:459.27px;line-height:14px">90</div>
<div class="c" style="top:459.27px;line-height:14px"><span class="pun">            </span><span class="ty">Help</span><span class="pun">.</span><span class="fld">Downloads</span><span class="pun">,</span></div>
<div class="n" style="top:475.27px;line-height:14px">91</div>
<div class="c" style="top:475.27px;line-height:14px"><span class="pun">            </span><span class="ty">Help</span><span class="pun">.</span><span class="fld">TGdownload</span></div>
<div class="n" style="top:488.27px;line-height:14px">92</div>
<div class="c" style="top:488.27px;line-height:14px"><span class="pun">        };</span></div>
<div class="n" style="top:501.27px;line-height:14px">93</div>
<div class="n" style="top:517.27px;line-height:14px">94</div>
<div class="c" style="top:517.27px;line-height:14px"><span class="pun">        </span><span class="com">// Token: 0x040000F5 RID: 245</span></div>
<div class="n" style="top:533.27px;line-height:14px">95</div>
<div class="c" style="top:533.27px;line-height:14px"><span class="pun">        </span><span class="kw">public static int </span><span class="fld">sizefile</span><span class="pun"> = </span><span class="num">11500000</span><span class="pun">;</span></div>
<div class="n" style="top:546.27px;line-height:14px">96</div>
<div class="n" style="top:562.27px;line-height:14px">97</div>
<div class="c" style="top:562.27px;line-height:14px"><span class="pun">        </span><span class="com">// Token: 0x040000F6 RID: 246</span></div>
<div class="n" style="top:578.27px;line-height:14px">98</div>
<div class="c" style="top:578.27px;line-height:14px"><span class="pun">        </span><span class="kw">public static string </span><span class="fld">ApiUrl</span><span class="pun"> = </span><span class="st">&quot;&quot;</span><span class="pun">;</span></div>
<div class="n" style="top:591.27px;line-height:14px">99</div>
<div class="n" style="top:607.27px;line-height:14px">100</div>
<div class="c" style="top:607.27px;line-height:14px"><span class="pun">        </span><span class="com">// Token: 0x040000F7 RID: 247</span></div>
<div class="n" style="top:623.27px;line-height:14px">101</div>
<div class="c" style="top:623.27px;line-height:14px"><span class="pun">        </span><span class="kw">public static string </span><span class="fld">myPrivateServer</span><span class="pun"> = </span><span class="st">&quot;</span><span class="lnk">http://207.244.199.46/index.php</span><span class="st">&quot;</span><span class="pun">;</span></div>
<div class="n" style="top:636.27px;line-height:14px">102</div>
<div class="n" style="top:652.27px;line-height:14px">103</div>
<div class="c" style="top:652.27px;line-height:14px"><span class="pun">        </span><span class="com">// Token: 0x040000F8 RID: 248</span></div>
<div class="n" style="top:668.27px;line-height:14px">104</div>
<div class="c" style="top:668.27px;line-height:14px"><span class="pun">        </span><span class="kw">public static </span><span class="ty">OMethod</span><span class="pun">.</span><span class="et">OMethods</span><span class="pun"> </span><span class="fld">method</span><span class="pun"> = </span><span class="ty">OMethod</span><span class="pun">.</span><span class="et">OMethods</span><span class="pun">.</span><span class="en">MyPrivateServer</span><span class="pun">;</span></div>
<div class="n" style="top:681.27px;line-height:14px">105</div>
<div class="c" style="top:681.27px;line-height:14px"><span class="pun">    }</span></div>
<div class="n" style="top:694.27px;line-height:14px">106</div>
<div class="c" style="top:694.27px;line-height:14px"><span class="pun">}</span></div>
<div class="n" style="top:707.27px;line-height:14px">107</div>
<div class="g" style="left:591px;top:33.0px;height:661.4px;background:repeating-linear-gradient(to bottom,#616161 0 3px,transparent 3px 6px)"></div>
<div class="g" style="left:619px;top:33.0px;height:648.4px;background:repeating-linear-gradient(to bottom,#286a54 0 3px,transparent 3px 6px)"></div>
<div class="g" style="left:647px;top:33.0px;height:121.4px;background:repeating-linear-gradient(to bottom,#616161 0 3px,transparent 3px 6px)"></div>
<div class="g" style="left:647px;top:225.4px;height:144.0px;background:repeating-linear-gradient(to bottom,#616161 0 3px,transparent 3px 6px)"></div>
<div class="g" style="left:647px;top:440.4px;height:48.0px;background:repeating-linear-gradient(to bottom,#616161 0 3px,transparent 3px 6px)"></div>
<div class="g" style="left:675px;top:57.4px;height:29.0px;background:repeating-linear-gradient(to bottom,#616161 0 3px,transparent 3px 6px)"></div>
<div class="g" style="left:675px;top:112.4px;height:29.0px;background:repeating-linear-gradient(to bottom,#616161 0 3px,transparent 3px 6px)"></div>
<div class="a" style="left:586px;top:708px;width:1053px;height:1px;background:#9a9a9a"></div>
</body></html>
